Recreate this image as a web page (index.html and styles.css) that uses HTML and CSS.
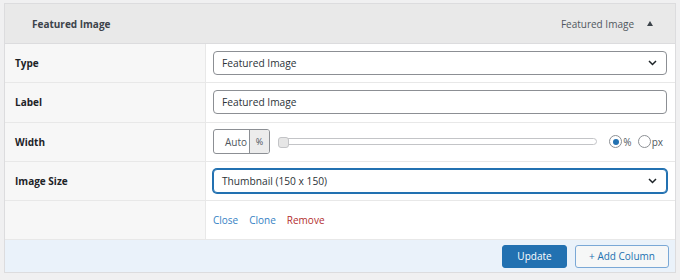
FILE: index.html
```html
<!DOCTYPE html>
<html lang="en">

<head>
  <meta charset="UTF-8" />
  <title>Column Settings</title>
  <link rel="stylesheet" href="styles.css">
</head>

<body>
  <div class="column_panel">
    <div class="panel_head">
      <span class="head_title">Featured Image</span>
      <span class="head_type">Featured Image</span>
      <span class="head_caret"></span>
    </div>

    <div class="setting_row">
      <div class="setting_label">Type</div>
      <div class="setting_value">
        <div class="select_field">
          <span>Featured Image</span>
          <svg class="chevron" width="9" height="6" viewBox="0 0 9 6"><polyline points="1,1 4.5,4.5 8,1" /></svg>
        </div>
      </div>
    </div>

    <div class="setting_row">
      <div class="setting_label">Label</div>
      <div class="setting_value">
        <div class="input_field">Featured Image</div>
      </div>
    </div>

    <div class="setting_row">
      <div class="setting_label">Width</div>
      <div class="setting_value width_value">
        <div class="unit_box">
          <span class="unit_auto">Auto</span>
          <span class="unit_sign">%</span>
        </div>
        <div class="slider">
          <div class="slider_track"></div>
          <div class="slider_handle"></div>
        </div>
        <label class="radio_option"><span class="radio checked"></span>%</label>
        <label class="radio_option"><span class="radio"></span>px</label>
      </div>
    </div>

    <div class="setting_row">
      <div class="setting_label">Image Size</div>
      <div class="setting_value">
        <div class="select_field focused">
          <span>Thumbnail (150 x 150)</span>
          <svg class="chevron" width="9" height="6" viewBox="0 0 9 6"><polyline points="1,1 4.5,4.5 8,1" /></svg>
        </div>
      </div>
    </div>

    <div class="setting_row">
      <div class="setting_label"></div>
      <div class="setting_value actions">
        <a class="action_link">Close</a>
        <a class="action_link">Clone</a>
        <a class="action_link remove">Remove</a>
      </div>
    </div>

    <div class="panel_foot">
      <button class="btn btn_primary" type="button">Update</button>
      <button class="btn btn_secondary" type="button">+ Add Column</button>
    </div>
  </div>
</body>

</html>
```

FILE: styles.css
```css
body {
  font-family: "Open Sans", "Noto Sans", sans-serif;
  font-size: 10px;
  color: #1d2327;
  background-color: #f0f0f1;
  margin: 0;
  padding: 3px 4px 0 4px;
}

.column_panel {
  border: 1px solid #dcdcde;
  background-color: #fff;
}

.panel_head {
  height: 39px;
  display: flex;
  align-items: center;
  padding: 0 22px 0 27px;
  background-color: #e9e9e9;
  border-bottom: 1px solid #dcdcde;
}

.head_title {
  font-weight: 700;
  color: #3c434a;
  flex: 1;
}

.head_type {
  color: #50575e;
}

.head_caret {
  margin-left: 13px;
  width: 0;
  height: 0;
  border-left: 3px solid transparent;
  border-right: 3px solid transparent;
  border-bottom: 5px solid #3c434a;
}

.setting_row {
  display: grid;
  grid-template-columns: 201px 1fr;
  border-bottom: 1px solid #e8e8e8;
}

.setting_label {
  height: 38.3px;
  display: flex;
  align-items: center;
  padding-left: 10px;
  font-weight: 700;
  background-color: #f7f7f7;
  border-right: 1px solid #e8e8e8;
}

.setting_value {
  display: flex;
  align-items: center;
  padding: 0 8px 0 7px;
}

.select_field,
.input_field {
  flex: 1;
  height: 22px;
  display: flex;
  align-items: center;
  justify-content: space-between;
  padding: 0 9px 0 8px;
  border: 1px solid #8c8f94;
  border-radius: 4px;
  background-color: #fff;
  font-size: 10.2px;
  color: #2c3338;
}

.select_field.focused {
  border-color: #2271b1;
  box-shadow: 0 0 0 1px #2271b1;
}

.chevron {
  fill: none;
  stroke: #1d2327;
  stroke-width: 1.5;
}

.unit_box {
  display: flex;
  height: 23px;
  border: 1px solid #8c8f94;
  border-radius: 3px;
  overflow: hidden;
  color: #50575e;
}

.unit_auto {
  width: 35px;
  display: flex;
  align-items: center;
  justify-content: flex-end;
  padding-right: 2px;
  box-sizing: border-box;
}

.unit_sign {
  width: 19px;
  display: flex;
  align-items: center;
  justify-content: center;
  font-size: 9px;
  background-color: #ececec;
  border-left: 1px solid #8c8f94;
}

.slider {
  position: relative;
  flex: 1;
  height: 12px;
  margin: 0 12px 0 8px;
  display: flex;
  align-items: center;
}

.slider_track {
  flex: 1;
  height: 5px;
  margin-left: 2px;
  border: 1px solid #c3c4c7;
  border-radius: 4px;
  background-color: #fff;
}

.slider_handle {
  position: absolute;
  left: 0;
  top: 1px;
  width: 9px;
  height: 9px;
  border: 1px solid #c3c4c7;
  border-radius: 3px;
  background-color: #e6e6e6;
}

.radio_option {
  display: flex;
  align-items: center;
  margin-right: 6px;
  color: #50575e;
}

.radio_option:last-child {
  margin-right: 4px;
}

.radio {
  width: 11px;
  height: 11px;
  border: 1px solid #8c8f94;
  border-radius: 50%;
  margin-right: 1px;
  display: flex;
  align-items: center;
  justify-content: center;
}

.radio.checked::after {
  content: "";
  width: 6px;
  height: 6px;
  border-radius: 50%;
  background-color: #2271b1;
}

.actions {
  gap: 11px;
}

.action_link {
  color: #3582c4;
  cursor: pointer;
}

.action_link.remove {
  color: #b32d2e;
}

.panel_foot {
  height: 32px;
  display: flex;
  align-items: center;
  justify-content: flex-end;
  gap: 8px;
  padding-right: 6px;
  background-color: #eaf2fa;
}

.btn {
  height: 23px;
  font-family: "Open Sans", "Noto Sans", sans-serif;
  font-size: 10px;
  border-radius: 3px;
  cursor: pointer;
}

.btn_primary {
  width: 65px;
  color: #fff;
  background-color: #2271b1;
  border: 1px solid #2271b1;
}

.btn_secondary {
  width: 94px;
  color: #2271b1;
  background-color: #f6f7f7;
  border: 1px solid #7aa8d6;
}
```
